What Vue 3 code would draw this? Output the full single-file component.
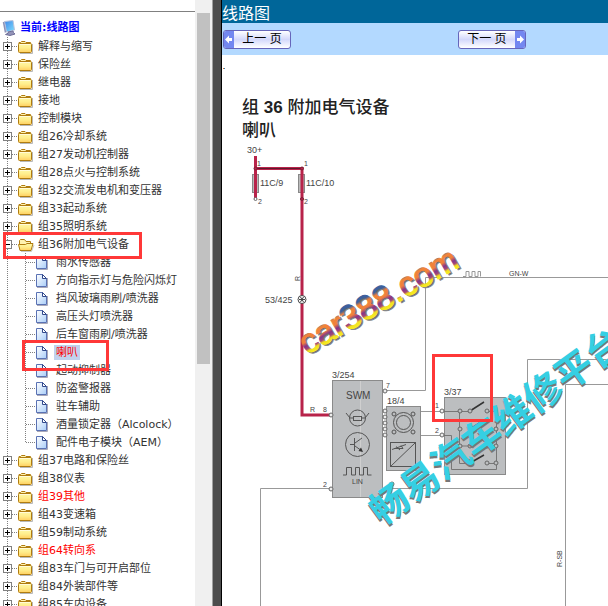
<template>
  <div class="page">
    <svg class="defs" width="0" height="0" aria-hidden="true">
      <defs>
        <linearGradient id="folderFill" x1="0" y1="0" x2="0" y2="1">
          <stop offset="0" stop-color="#fff9a8" />
          <stop offset="0.500" stop-color="#ffee8c" />
          <stop offset="1" stop-color="#ffcf60" />
        </linearGradient>
        <linearGradient id="docFill" x1="0" y1="0" x2="1" y2="1">
          <stop offset="0" stop-color="#ffffff" />
          <stop offset="1" stop-color="#a9cdf8" />
        </linearGradient>
        <linearGradient id="screenFill" x1="0" y1="0" x2="1" y2="1">
          <stop offset="0" stop-color="#3f86e8" />
          <stop offset="1" stop-color="#7fe0ff" />
        </linearGradient>
      </defs>
    </svg>

    <nav class="sidebar">
      <div class="tree">
        <div class="tree-title">
          <svg width="17" height="18" viewBox="0 0 17 18">
            <path d="M2.500 2.500L11 1.500L12.500 11L4.500 13Z" fill="url(#screenFill)" stroke="#b9c4dc" />
            <path d="M1.500 3L3.500 13.500" stroke="#8b92b8" stroke-width="1.500" />
            <path d="M6 13L11 12L11.500 13.500L13 15L8 16.500L3.500 15.500L6.500 14Z" fill="#9494b8" stroke="#6e6e98" />
          </svg>
          <a href="#">当前:线路图</a>
        </div>
        <ul>
          <li v-for="group in groups" :key="group.name">
            <div class="row">
              <button class="toggle" type="button" :aria-label="group.name" @click="group.open = !group.open">
                <svg width="18" height="18" viewBox="0 0 18 18">
                  <path d="M7.500 0V18M12 9.500H18" stroke="#808080" stroke-dasharray="1 1" />
                  <rect x="3.500" y="5.500" width="8" height="8" fill="#fff" stroke="#808080" />
                  <path :d="group.open ? 'M5 9.500H10' : 'M5 9.500H10M7.500 7V12'" stroke="#000" />
                </svg>
              </button>
              <svg width="18" height="18" viewBox="0 0 18 18">
                <template v-if="group.open">
                  <path d="M3 16.500H13.500L16 10" fill="none" stroke="#c9c9c9" />
                  <path d="M1.500 14V5.500L2.500 4.500H6.500L8 6.500H12.500V9" fill="#fff3b0" stroke="#b07c10" />
                  <path d="M2 15.500L0.500 9.500H7.500L9 8.500H15L13 15.500Z" fill="url(#folderFill)" stroke="#b07c10" />
                </template>
                <template v-else>
                  <path d="M2 16.500H14.500V7" fill="none" stroke="#b9b9b9" />
                  <path d="M1 7V5.500H2.500L3.500 4.500H7L8 5.500H12.500V7" fill="#fff3b0" stroke="#b07c10" />
                  <rect x="0.500" y="6.500" width="13" height="9" rx="1" fill="url(#folderFill)" stroke="#b07c10" />
                  <path d="M2 7.500H12" stroke="#fffbd8" />
                </template>
              </svg>
              <a href="#" :class="{ hot: group.hot }">{{ group.name }}</a>
              <span v-if="group.marked" class="mark mark-group"></span>
            </div>
            <ul v-if="group.open">
              <li v-for="(item, i) in group.items" :key="item" class="row">
                <svg width="54" height="18" viewBox="0 0 54 18">
                  <path d="M7.500 0V18M26 9.500H36" stroke="#808080" stroke-dasharray="1 1" />
                  <path :d="i === group.items.length - 1 ? 'M25.500 0V10' : 'M25.500 0V18'" stroke="#808080" stroke-dasharray="1 1" />
                  <path d="M37 16.500H47.500V7" fill="none" stroke="#a9a9b9" />
                  <path d="M36.500 3.500H42.500L46.500 7.500V15.500H36.500Z" fill="url(#docFill)" stroke="#5a72b4" />
                  <path d="M42.500 3.500V7.500H46.500Z" fill="#fff" stroke="#31488c" />
                </svg>
                <a href="#" :class="{ selected: item === selected }" @click.prevent="selected = item">{{ item }}</a>
                <span v-if="item === '喇叭'" class="mark mark-item"></span>
              </li>
            </ul>
          </li>
        </ul>
      </div>
      <div class="scrollbar"><div class="thumb"></div></div>
    </nav>

    <div class="divider"></div>

    <main class="content">
      <header>线路图</header>
      <div class="toolbar">
        <div>
          <button type="button" class="pager">
            <svg width="10" height="17" viewBox="0 0 10 17">
              <rect width="10" height="17" fill="#7387f0" />
              <path d="M1 8.500L5 4.500V7H8V10H5V12.500Z" fill="#fff" />
            </svg>
            <span>上一 页</span>
          </button>
        </div>
        <div>
          <button type="button" class="pager">
            <span>下一 页</span>
            <svg width="10" height="17" viewBox="0 0 10 17">
              <rect width="10" height="17" fill="#7387f0" />
              <path d="M9 8.500L5 4.500V7H2V10H5V12.500Z" fill="#fff" />
            </svg>
          </button>
        </div>
      </div>

      <article>
        <div class="speck"></div>
        <h1>组 <b>36</b> 附加电气设备<br />喇叭</h1>

        <svg class="diagram" width="800" height="700" viewBox="222 142 800 700">
          <defs>
            <linearGradient id="rainbow" x1="0" y1="0" x2="0" y2="1">
              <stop offset="0.150" stop-color="#3c5f9c" />
              <stop offset="0.280" stop-color="#3c5f9c" />
              <stop offset="0.360" stop-color="#f08438" />
              <stop offset="0.500" stop-color="#f0803c" />
              <stop offset="0.600" stop-color="#84348c" />
              <stop offset="0.680" stop-color="#a04878" />
              <stop offset="0.740" stop-color="#f0e020" />
              <stop offset="0.850" stop-color="#f8f020" />
            </linearGradient>
          </defs>

          <!-- signal wires -->
          <g fill="none" stroke="#999">
            <path d="M385 390.500H425.500V277.500H1022" />
            <path d="M382 488.500H527.500V359.500H1022" />
            <path d="M331 488.500H260.500V842" />
            <path d="M1022 384.500H565.500V842" />
            <path d="M421 411.500H444M421 435.500H444" />
            <path d="M463 276.500H466V271.500H469V276.500H472V271.500H475V276.500H478V271.500H480.500V276.500" />
          </g>

          <!-- fuses and supply -->
          <g fill="#bbb" stroke="#888">
            <rect x="252.500" y="174.500" width="6" height="18" />
            <rect x="298.500" y="174.500" width="6" height="18" />
          </g>
          <path d="M255.500 156V198M255 168.500H302V415H331" fill="none" stroke="#b8234a" stroke-width="3" />
          <path d="M255 168.500H302" stroke="#5c1a2c" />
          <g fill="#b8234a" stroke="#7c2038">
            <circle cx="255.500" cy="168.500" r="1.500" />
            <circle cx="302" cy="168.500" r="1.500" />
            <circle cx="302" cy="199" r="1.500" />
          </g>
          <circle cx="255.500" cy="199" r="1.500" fill="#fff" stroke="#666" />
          <circle cx="302" cy="299.500" r="4" fill="#fff" stroke="#444" />
          <path d="M299 299.500H305M300.500 297L303.500 302M303.500 297L300.500 302" stroke="#444" />

          <!-- component boxes -->
          <g fill="#bcbec0" stroke="#8a8a8a">
            <rect x="332.500" y="380.500" width="50" height="117" />
            <rect x="386.500" y="406.500" width="34" height="64" />
            <rect x="444.500" y="397.500" width="61" height="77" />
          </g>
          <path d="M360.500 381V497" stroke="#cfcfcf" />

          <!-- steering wheel module symbols -->
          <g fill="none" stroke="#555">
            <circle cx="357.500" cy="418" r="8" />
            <rect x="353.500" y="416.500" width="8" height="4" />
            <path d="M346 413L350 418H353M362 418H365L369 413" />
            <circle cx="357.500" cy="444.500" r="12" />
            <path d="M350 444.500H354.500M354.500 438V451M355 443L362 438M355 446L362 451" />
            <path d="M343 475H346.500V467.500H351.500V475H355.500V467.500H359.500V475H363.500V467.500H367.500V475H371.500" />
          </g>
          <path d="M363 452L358.500 451L361 447.500Z" fill="#333" />

          <!-- horn pad -->
          <g fill="none" stroke="#555">
            <circle cx="403.500" cy="422.500" r="10" />
            <circle cx="403.500" cy="422.500" r="7" />
            <circle v-for="p in padScrews" :key="p.join()" :cx="p[0]" :cy="p[1]" r="2" fill="#bcbec0" />
            <rect x="390.500" y="442.500" width="25" height="24" />
            <path d="M391 466L415 443M392 449.500L406 444.500M396 446.500L400 450M401 445.500L403 448.500H394" />
          </g>

          <!-- switch contacts -->
          <g fill="none" stroke="#777">
            <path d="M444 411.500H470M459.500 411V463.500H470M459.500 446H470" />
            <path d="M444 435.500H451.500V469.500H496.500V411.500H487" />
            <path d="M487 446H496M487 463.500H496" />
          </g>
          <path d="M470 411L484 402M470 429L482 421M470 446L484 438M470 463L484 455" stroke="#333" stroke-width="1.500" />

          <g fill="#eee" stroke="#666">
            <circle v-for="p in pins" :key="p.join()" :cx="p[0]" :cy="p[1]" r="2" />
          </g>
          <g fill="#bcbec0" stroke="#666">
            <circle v-for="p in contacts" :key="p.join()" :cx="p[0]" :cy="p[1]" r="2" />
          </g>

          <g class="labels">
            <text x="247" y="153">30+</text>
            <text x="260" y="186">11C/9</text>
            <text x="306" y="186">11C/10</text>
            <text x="265" y="303">53/425</text>
            <text x="332" y="378">3/254</text>
            <text x="387" y="404">18/4</text>
            <text x="444" y="395">3/37</text>
            <text x="346" y="399" class="big">SWM</text>
          </g>
          <g class="labels small">
            <text x="257" y="166">1</text>
            <text x="304" y="166">1</text>
            <text x="258" y="204">2</text>
            <text x="304" y="204">2</text>
            <text x="310" y="412">R</text>
            <text x="323" y="412">8</text>
            <text x="323" y="487">2</text>
            <text x="386" y="388">7</text>
            <text x="435" y="408">1</text>
            <text x="435" y="433">2</text>
            <text x="352" y="484">LIN</text>
            <text x="509" y="276">GN-W</text>
            <text transform="translate(300 281) rotate(-90)">R</text>
            <text transform="translate(562 567) rotate(-90)">R-SB</text>
          </g>

          <!-- watermarks -->
          <g transform="translate(307 355) rotate(-30)" class="site">
            <text x="1" y="2" fill="#666" stroke="#888">car388.com</text>
            <text fill="url(#rainbow)" stroke="url(#rainbow)">car388.com</text>
          </g>
          <g transform="translate(382 526) rotate(-36)" class="slogan">
            <text x="-1" y="2" fill="#777">畅易汽车维修平台</text>
            <text fill="#35cfe3">畅易汽车维修平台</text>
          </g>

          <rect x="433.500" y="355.500" width="58" height="65" fill="none" stroke="#ff3838" stroke-width="3" />
        </svg>
      </article>
    </main>
  </div>
</template>

<script setup>
import { ref, reactive } from 'vue';

const selected = ref('喇叭');

const groups = reactive([
  { name: '解释与缩写' },
  { name: '保险丝' },
  { name: '继电器' },
  { name: '接地' },
  { name: '控制模块' },
  { name: '组26冷却系统' },
  { name: '组27发动机控制器' },
  { name: '组28点火与控制系统' },
  { name: '组32交流发电机和变压器' },
  { name: '组33起动系统' },
  { name: '组35照明系统' },
  {
    name: '组36附加电气设备',
    open: true,
    marked: true,
    items: [
      '雨水传感器',
      '方向指示灯与危险闪烁灯',
      '挡风玻璃雨刷/喷洗器',
      '高压头灯喷洗器',
      '后车窗雨刷/喷洗器',
      '喇叭',
      '起动抑制器',
      '防盗警报器',
      '驻车辅助',
      '酒量锁定器（Alcolock）',
      '配件电子模块（AEM）'
    ]
  },
  { name: '组37电路和保险丝' },
  { name: '组38仪表' },
  { name: '组39其他', hot: true },
  { name: '组43变速箱' },
  { name: '组59制动系统' },
  { name: '组64转向系', hot: true },
  { name: '组83车门与可开启部位' },
  { name: '组84外装部件等' },
  { name: '组85车内设备' }
]);

const padScrews = [[394, 414], [413, 414], [394, 432], [413, 432]];

const pins = [
  [331, 415], [331, 489], [385, 391], [392, 484],
  [385, 411], [385, 417], [385, 423], [385, 429], [385, 435],
  [442, 411], [442, 435]
];

const contacts = [
  [460, 411], [470, 411], [487, 411],
  [460, 429], [496, 429],
  [460, 446], [470, 446], [487, 446], [496, 446],
  [487, 463], [496, 463]
];
</script>

<style>
body {
  margin: 0;
}
</style>

<style scoped>
.page {
  display: flex;
  height: 100vh;
  overflow: hidden;
  background: #fff;
  font-family: "DejaVu Sans", "Noto Sans CJK SC", sans-serif;
}

.defs {
  position: absolute;
}

.sidebar {
  display: flex;
  flex: none;
  width: 212px;
  overflow: hidden;
}

.tree {
  flex: 1;
  margin-top: 11px;
  border-top: 1px solid #808080;
  font-size: 11px;
  line-height: 18px;
  white-space: nowrap;
}

.tree-title {
  display: flex;
  align-items: center;
  gap: 1px;
  padding: 7px 0 0 2px;
}

.tree-title a {
  color: #0000ff;
  font-weight: bold;
}

ul {
  margin: 0;
  padding: 0;
  list-style: none;
}

.row {
  position: relative;
  display: flex;
  align-items: center;
  height: 18px;
}

.tree svg {
  display: block;
  flex: none;
}

a {
  color: #333;
  text-decoration: none;
}

.row a {
  padding: 0 2px;
  line-height: 15px;
}

.row .hot {
  color: #ff0000;
}

.row .selected {
  background: #c1d2ee;
  color: #ff0000;
}

.toggle {
  padding: 0;
  border: none;
  background: none;
  cursor: pointer;
}

.mark {
  position: absolute;
  z-index: 1;
  top: -3px;
  box-sizing: border-box;
  border: 3px solid #ff3838;
  pointer-events: none;
}

.mark-group {
  left: 3px;
  width: 139px;
  height: 27px;
}

.mark-item {
  left: 22px;
  width: 87px;
  height: 31px;
}

.scrollbar {
  width: 17px;
  background: #f0f0f0;
}

.thumb {
  height: 58%;
  margin: 13px 2px 0;
  background: #c1c1c1;
}

.divider {
  flex: none;
  width: 8px;
  border-left: 1px solid #a0a0a0;
  border-right: 1px solid #000;
  background: #4d4d4d;
}

.content {
  flex: 1;
  min-width: 0;
  overflow: hidden;
}

header {
  height: 23px;
  background: #006699;
  color: #fff;
  font-size: 16px;
  line-height: 27px;
}

.toolbar {
  display: grid;
  grid-template-columns: 61% 1fr;
  align-items: center;
  height: 32px;
  padding-left: 1px;
  background: #b3d9ff;
}

.pager {
  display: flex;
  width: 68px;
  height: 19px;
  padding: 0;
  overflow: hidden;
  border: 1px solid #6666bb;
  border-radius: 3px;
  background: linear-gradient(#ffffff, #d3d8fb 50%, #ffffff);
  color: #000;
  font-family: "Liberation Sans", "Noto Sans CJK SC", sans-serif;
  font-size: 12px;
  line-height: 17px;
  cursor: pointer;
}

.pager span {
  flex: 1;
  text-align: center;
}

.speck {
  width: 2px;
  height: 1px;
  margin: 13px 0 0 1px;
  background: linear-gradient(90deg, #e07020 50%, #2080c0 50%);
}

h1 {
  margin: 27px 0 0 20px;
  color: #222;
  font-family: "Liberation Sans", "Noto Sans CJK SC", sans-serif;
  font-size: 17px;
  font-weight: 500;
  line-height: 23px;
  white-space: nowrap;
}

.diagram {
  display: block;
}

.labels {
  fill: #444;
  font-family: "Liberation Sans", sans-serif;
  font-size: 9px;
}

.labels .big {
  font-size: 10px;
}

.small {
  font-size: 7px;
}

.site {
  font-family: "Liberation Sans", sans-serif;
  font-size: 34px;
}

.slogan {
  font-family: "Noto Sans CJK SC", sans-serif;
  font-size: 38px;
  font-weight: bold;
}
</style>
